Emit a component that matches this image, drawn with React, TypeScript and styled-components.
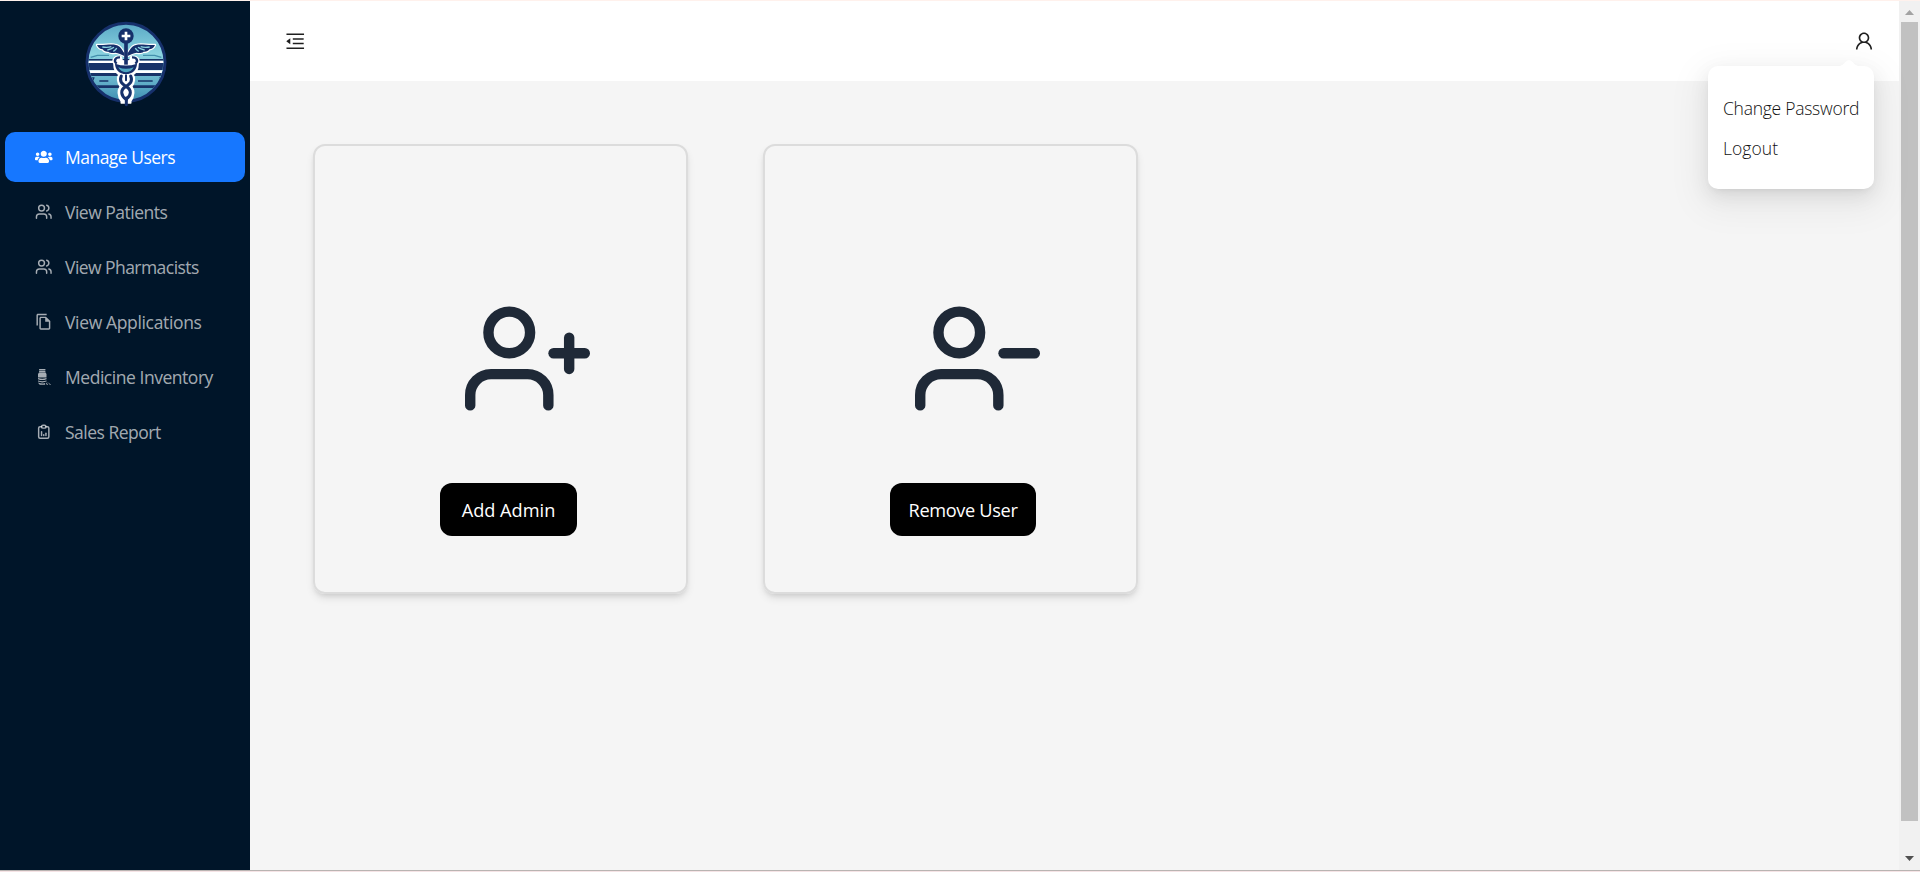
import React from "react";
import styled, { createGlobalStyle } from "styled-components";
import { AiOutlineMenuFold, AiOutlineUser } from "react-icons/ai";
import { FiUserMinus, FiUserPlus } from "react-icons/fi";
import { FaUsers } from "react-icons/fa";
import { LuUsers } from "react-icons/lu";
import { MdOutlineFileCopy } from "react-icons/md";
import { TbReportAnalytics } from "react-icons/tb";

const GlobalStyle = createGlobalStyle`
  * { box-sizing: border-box; }
  body { margin: 0; font-family: "Open Sans", "Noto Sans", sans-serif; overflow: hidden; }
`;

const Frame = styled.div`
  display: flex;
  width: 1920px;
  height: 872px;
  border-top: 1px solid #fff1ec;
  border-bottom: 1px solid #f6e4e6;
  background: #f5f5f5;
`;

const Sidebar = styled.aside`
  width: 250px;
  flex: none;
  background: #001529;
  border-bottom: 1px solid #b9b4b2;
`;

const LogoRow = styled.div`
  height: 131px;
  padding: 19px 0 0 84px;
`;

const Menu = styled.nav`
  display: flex;
  flex-direction: column;
  gap: 5px;
  padding: 0 5px;
`;

const MenuItem = styled.a<{ $active?: boolean }>`
  display: flex;
  align-items: center;
  height: 50px;
  padding-left: 30px;
  border-radius: 10px;
  font-size: 17.5px;
  white-space: nowrap;
  color: ${(p) => (p.$active ? "#fff" : "rgba(255, 255, 255, 0.65)")};
  background: ${(p) => (p.$active ? "#1677ff" : "transparent")};
`;

const MenuIcon = styled.span`
  display: flex;
  width: 18px;
  margin-right: 12px;
  font-size: 17.5px;
`;

const Label = styled.span<{ $spacing?: number }>`
  letter-spacing: ${(p) => p.$spacing ?? 0}px;
`;

const Main = styled.main`
  display: flex;
  flex-direction: column;
  flex: 1;
  border-bottom: 1px solid #b9b4b2;
`;

const Header = styled.header`
  display: flex;
  align-items: center;
  justify-content: space-between;
  height: 80px;
  padding: 0 24px 0 33.5px;
  background: #fff;
  color: rgba(0, 0, 0, 0.88);
  font-size: 22.5px;
`;

const UserMenu = styled.div`
  position: relative;
  display: flex;
  font-size: 22px;
`;

const Popover = styled.div`
  position: absolute;
  top: 36px;
  right: 1px;
  width: 166px;
  height: 123px;
  padding: 22px 0 0 15px;
  border-radius: 10px;
  background: #fff;
  box-shadow: 0 7px 20px 0 rgba(0, 0, 0, 0.08), 0 4px 8px -5px rgba(0, 0, 0, 0.12),
    0 11px 35px 10px rgba(0, 0, 0, 0.05);
`;

const PopoverArrow = styled.svg`
  position: absolute;
  top: -6px;
  left: 130px;
  width: 22px;
  height: 6px;
`;

const PopoverItem = styled.div`
  height: 40px;
  line-height: 40px;
  font-size: 17.5px;
  font-weight: 300;
  color: #111;
  white-space: nowrap;
`;

const Cards = styled.section`
  display: flex;
  gap: 75px;
  padding: 63px 0 0 63px;
`;

const Card = styled.article`
  display: flex;
  flex-direction: column;
  align-items: flex-start;
  width: 375px;
  height: 450px;
  padding: 150px 0 0 125px;
  border: 2px solid #dcdcdc;
  border-radius: 12px;
  box-shadow: 0 5px 8px -1px rgba(0, 0, 0, 0.1), 0 3px 5px -2px rgba(0, 0, 0, 0.1);
`;

const CardIcon = styled.div`
  display: flex;
  margin-left: 25px;
  font-size: 125px;
  color: #1f2937;
`;

const CardButton = styled.button<{ $width: number }>`
  width: ${(p) => p.$width}px;
  height: 53px;
  margin-top: 62px;
  padding: 0;
  border: 0;
  border-radius: 12px;
  background: #000;
  color: #fff;
  font-family: inherit;
  font-size: 18.2px;
  white-space: nowrap;
`;

const Scrollbar = styled.div`
  display: flex;
  flex-direction: column;
  align-items: center;
  width: 21px;
  background: #f1f1f1;
  border-bottom: 1px solid #b9b4b2;
`;

const ScrollButton = styled.div`
  display: flex;
  height: 21px;
`;

const Thumb = styled.div`
  width: 17px;
  height: 799px;
  background: #c1c1c1;
`;

const ScrollEnd = styled.div`
  padding-top: 28px;
  display: flex;
`;

function Logo() {
  return (
    <svg width="86" height="88" viewBox="0 0 258 264">
      <defs>
        <linearGradient id="sky" x1="0" y1="0" x2="0" y2="1">
          <stop offset="0" stopColor="#5aa9c6" />
          <stop offset="0.4" stopColor="#8bd3e0" />
          <stop offset="0.75" stopColor="#63b0c9" />
          <stop offset="1" stopColor="#3f8fb2" />
        </linearGradient>
        <clipPath id="disc">
          <circle cx="126" cy="127" r="112" />
        </clipPath>
      </defs>
      <circle cx="126" cy="127" r="117" fill="url(#sky)" stroke="#16306b" strokeWidth="9" />
      <g clipPath="url(#disc)">
        <path d="M20 112L40 106H75M232 112L212 106H177" stroke="#4390ad" strokeWidth="4" fill="none" />
        <path d="M0 117H258V122H0z" fill="#173368" />
        <path d="M0 122H258V129H0z" fill="#fff" />
        <path d="M0 129H258V150H0z" fill="#173368" />
        <path d="M0 151H258V159H0z" fill="#fff" />
        <path d="M0 159H258V168H0z" fill="#173368" />
        <path d="M0 196H258V204H0z" fill="#173368" />
        <path d="M0 172H32L25 196H0zM258 172H226L232 196H258z" fill="#173368" />
        <path d="M46 183H73M162 183H206" stroke="#173368" strokeWidth="5" />
      </g>
      {/* wings */}
      <g strokeLinejoin="round">
        <path
          id="wing"
          d="M121 99C112 88 110 78 96 75C82 71 65 76 39 75C43 84 49 87 56 88C59 93 66 96 73 95C79 100 88 100 94 98C103 99 112 103 121 108z"
          fill="#16306b"
          stroke="#fff"
          strokeWidth="7"
          paintOrder="stroke"
        />
        <path
          d="M131 99C140 88 142 78 156 75C170 71 187 76 213 75C209 84 203 87 196 88C193 93 186 96 179 95C173 100 164 100 158 98C149 99 140 103 131 108z"
          fill="#16306b"
          stroke="#fff"
          strokeWidth="7"
          paintOrder="stroke"
        />
        <path
          d="M55 81Q70 84 82 80M70 90Q82 88 90 82M88 94Q96 90 98 84M197 81Q182 84 170 80M182 90Q170 88 162 82M164 94Q156 90 154 84"
          fill="none"
          stroke="#8bd3e0"
          strokeWidth="4"
        />
      </g>
      {/* white halo around the bowl and the snakes */}
      <path
        d="M110 111C93 107 84 118 91 131C91 148 97 158 107 163C99 173 101 188 110 199C101 213 104 230 113 243V248H139V243C148 230 151 213 142 199C151 188 153 173 145 163C155 158 161 148 161 131C168 118 159 107 142 111L138 124H114z"
        fill="#fff"
        stroke="#fff"
        strokeWidth="7"
        strokeLinejoin="round"
      />
      <path d="M126 66V134" stroke="#16306b" strokeWidth="11" />
      <circle cx="126" cy="48" r="23" fill="#16306b" />
      <path d="M126 35V61M113 48H139" stroke="#fff" strokeWidth="8" />
      <path d="M108 112C92 111 89 124 98 131M144 112C160 111 163 124 154 131" stroke="#16306b" strokeWidth="7" fill="none" />
      <path d="M93 131Q126 142 159 131C158 149 146 162 126 162S94 149 93 131z" fill="#16306b" />
      <path d="M103 142Q126 151 149 142Q143 156 126 157Q109 156 103 142z" fill="#4fa6c0" />
      <g fill="none" stroke="#16306b" strokeWidth="9" strokeLinecap="round">
        <path d="M112 168C104 184 115 192 127 200C144 210 142 226 127 237" />
        <path d="M140 168C148 184 137 192 125 200C108 210 110 226 127 239" />
        <path d="M126 166V181" strokeWidth="6" />
        <path d="M127 234V254" />
      </g>
    </svg>
  );
}

function MedicineIcon() {
  return (
    <svg width="18" height="18" viewBox="0 0 18 18" fill="currentColor">
      <rect x="4" y="1" width="6.5" height="1.4" rx="0.4" />
      <rect x="4" y="3" width="6.5" height="1.3" rx="0.4" />
      <path d="M4 4.6h6.5l1 1.4v3.6H3V6z" />
      <path d="M3 10q4.200 1.300 8.500 0v1.200q-4.200 1.800-8.500 0z" />
      <path d="M3 12.400q4.200 1.500 8.500 0v1.200q-4.200 1.600-8.500 0z" />
      <path d="M3.300 14.600q2 1 5 .900l1.800-.4v1.600H5q-1.500-.2-1.700-2.100z" />
      <path d="M11 15.600l1.400-.6M13.600 15.200l1 .5M11.600 16.500h1.200M14.600 16.500h1" stroke="currentColor" strokeWidth="0.900" />
    </svg>
  );
}

const menu = [
  { label: "Manage Users", icon: <FaUsers />, active: true, spacing: -0.52 },
  { label: "View Patients", icon: <LuUsers />, spacing: -0.49 },
  { label: "View Pharmacists", icon: <LuUsers />, spacing: -0.55 },
  { label: "View Applications", icon: <MdOutlineFileCopy />, spacing: -0.35 },
  { label: "Medicine Inventory", icon: <MedicineIcon />, spacing: -0.46 },
  { label: "Sales Report", icon: <TbReportAnalytics />, spacing: -0.5 },
];

export default function App() {
  return (
    <Frame>
      <GlobalStyle />
      <Sidebar>
        <LogoRow>
          <Logo />
        </LogoRow>
        <Menu>
          {menu.map((m) => (
            <MenuItem key={m.label} $active={m.active}>
              <MenuIcon>{m.icon}</MenuIcon>
              <Label $spacing={m.spacing}>{m.label}</Label>
            </MenuItem>
          ))}
        </Menu>
      </Sidebar>
      <Main>
        <Header>
          <AiOutlineMenuFold />
          <UserMenu>
            <AiOutlineUser />
            <Popover>
              <PopoverArrow viewBox="0 0 22 6">
                <path d="M0 6C4 6 5 4.500 8 1.500Q11 -1.500 14 1.500C17 4.500 18 6 22 6z" fill="#fff" />
              </PopoverArrow>
              <PopoverItem>
                <Label $spacing={-0.26}>Change Password</Label>
              </PopoverItem>
              <PopoverItem>
                <Label $spacing={0.05}>Logout</Label>
              </PopoverItem>
            </Popover>
          </UserMenu>
        </Header>
        <Cards>
          <Card>
            <CardIcon>
              <FiUserPlus />
            </CardIcon>
            <CardButton $width={137}>
              <Label $spacing={0}>Add Admin</Label>
            </CardButton>
          </Card>
          <Card>
            <CardIcon>
              <FiUserMinus />
            </CardIcon>
            <CardButton $width={146}>
              <Label $spacing={-0.35}>Remove User</Label>
            </CardButton>
          </Card>
        </Cards>
      </Main>
      <Scrollbar>
        <ScrollButton>
          <svg width="9" height="21" viewBox="0 0 9 21">
            <path d="M0 14L4.500 9L9 14z" fill="#a3a3a3" />
          </svg>
        </ScrollButton>
        <Thumb />
        <ScrollEnd>
          <svg width="9" height="20" viewBox="0 0 9 20">
            <path d="M0 7L4.500 12L9 7z" fill="#505050" />
          </svg>
        </ScrollEnd>
      </Scrollbar>
    </Frame>
  );
}
